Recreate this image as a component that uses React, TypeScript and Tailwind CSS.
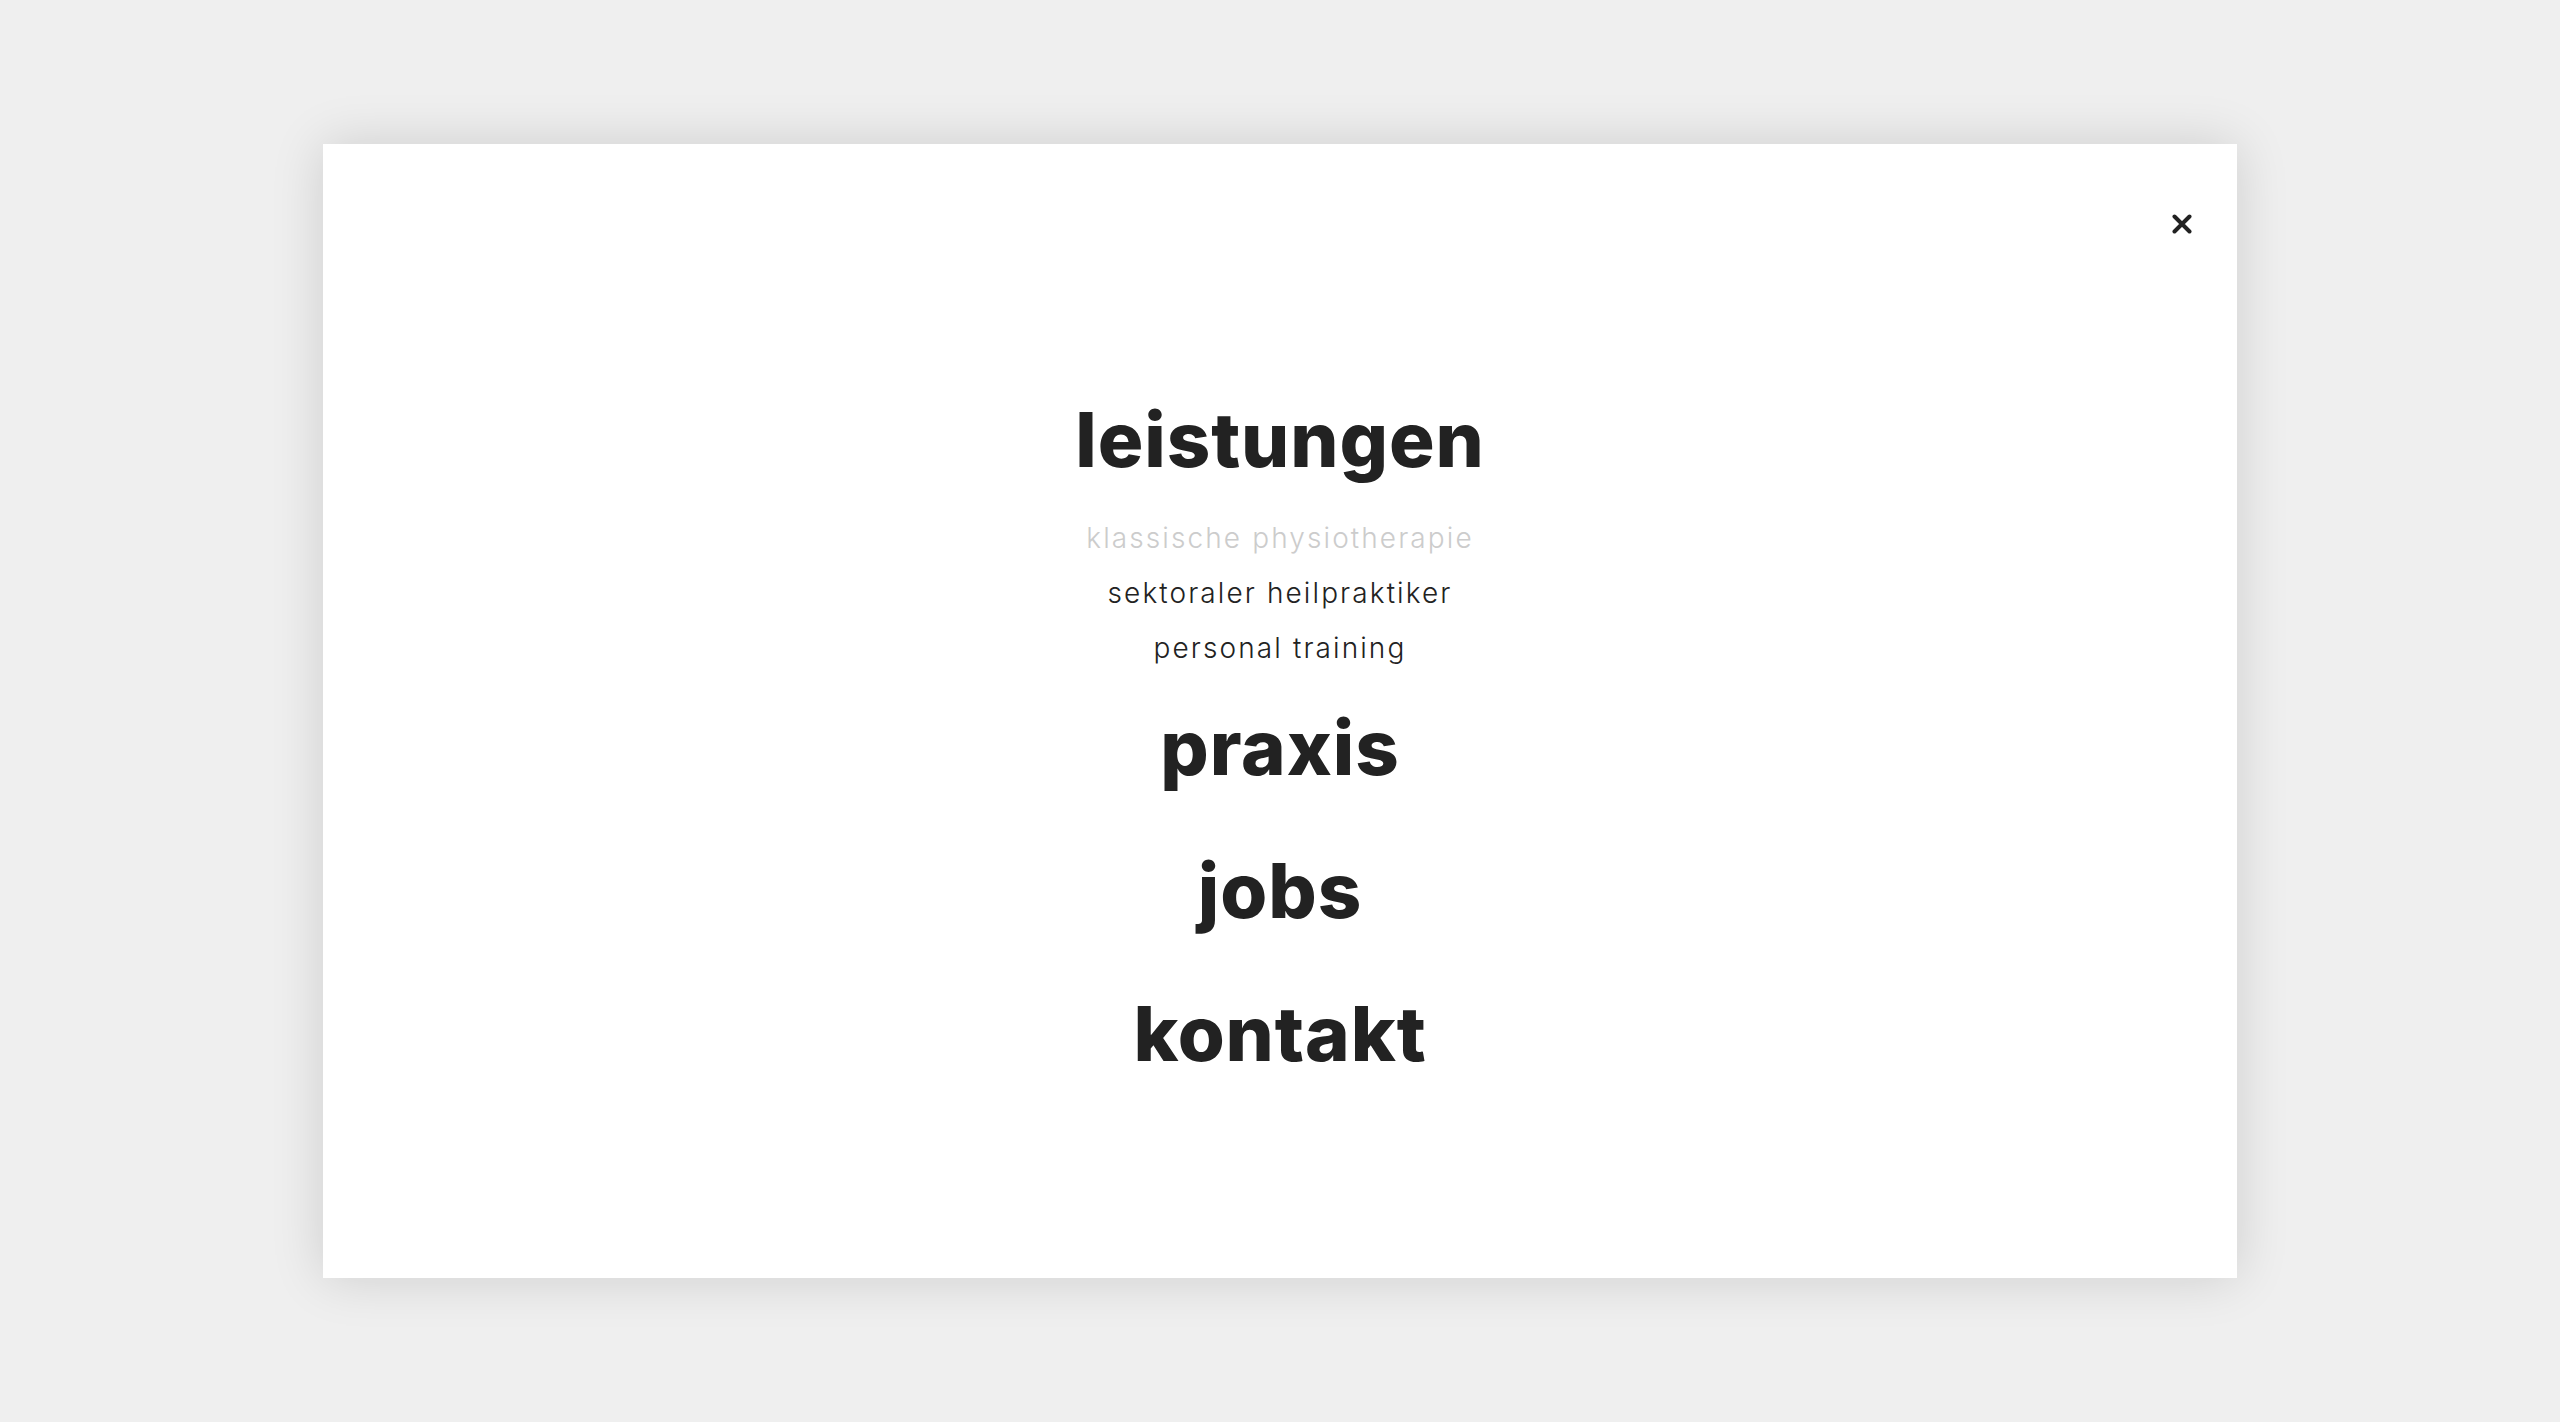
const subItems = [
  { label: 'klassische physiotherapie', active: true },
  { label: 'sektoraler heilpraktiker', active: false },
  { label: 'personal training', active: false },
];

const mainItems = ['praxis', 'jobs', 'kontakt'];

function NavHeading({ children }: { children: string }) {
  return (
    <a
      href="#"
      className="block text-[76px] leading-[143px] font-extrabold tracking-[0.012em] text-[#222222]"
    >
      {children}
    </a>
  );
}

export default function App() {
  return (
    <div
      className="flex h-screen w-full items-center justify-center bg-[#efefef]"
      style={{ fontFamily: 'Inter, "Open Sans", sans-serif' }}
    >
      <div className="relative h-[1134px] w-[1914px] bg-white shadow-[0_0_50px_rgba(0,0,0,0.14)]">
        <button className="absolute right-[45px] top-[70px] text-[#222222]" aria-label="close">
          <svg width="20" height="20" viewBox="0 0 20 20" fill="none">
            <path d="M2.5 2.5 L17.5 17.5 M17.5 2.5 L2.5 17.5" stroke="currentColor" strokeWidth="4" strokeLinecap="round" />
          </svg>
        </button>

        <nav className="flex flex-col items-center pt-[224px] text-center">
          <NavHeading>leistungen</NavHeading>
          <ul className="flex flex-col items-center">
            {subItems.map((item) => (
              <li key={item.label}>
                <a
                  href="#"
                  className={`block text-[28px] leading-[55px] font-light tracking-[0.075em] ${
                    item.active ? 'text-[#cccccc]' : 'text-[#222222]'
                  }`}
                >
                  {item.label}
                </a>
              </li>
            ))}
          </ul>
          {mainItems.map((item) => (
            <NavHeading key={item}>{item}</NavHeading>
          ))}
        </nav>
      </div>
    </div>
  );
}
